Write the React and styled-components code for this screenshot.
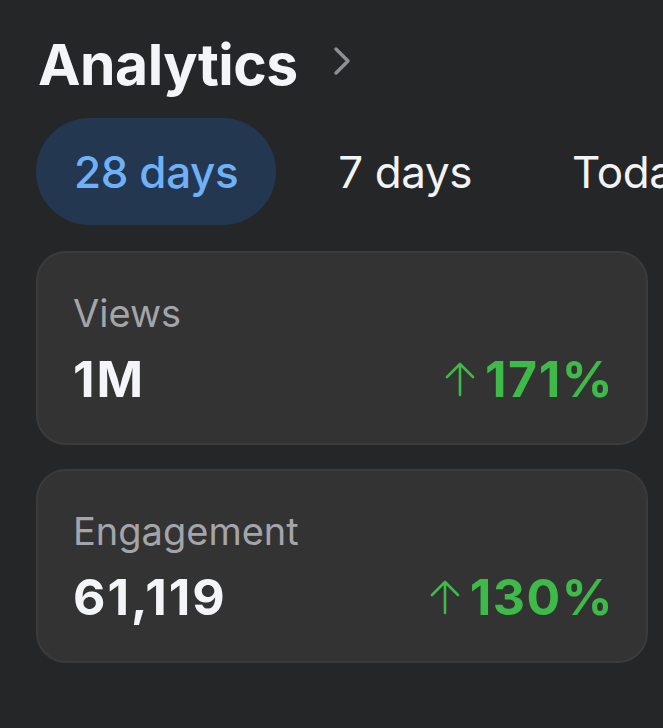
import React from "react"
import styled, { createGlobalStyle } from "styled-components"

const GlobalStyle = createGlobalStyle`
  html, body {
    margin: 0;
    padding: 0;
    background: #252628;
  }
  body {
    font-family: Inter, "Noto Sans", sans-serif;
    -webkit-font-smoothing: antialiased;
  }
`

const Page = styled.div`
  width: 663px;
  height: 728px;
  overflow: hidden;
  background: #252628;
  padding: 26px 0 0 36px;
  box-sizing: border-box;
`

const Header = styled.div`
  display: flex;
  align-items: center;
  gap: 34px;
  height: 76px;
  padding-left: 2px;
`

const Title = styled.h1`
  margin: 0;
  font-size: 57px;
  font-weight: 700;
  letter-spacing: -0.5px;
  color: #f4f5f8;
`

const Chevron = styled.svg`
  width: 20px;
  height: 30px;
  margin-top: -6px;
`

const Tabs = styled.div`
  display: flex;
  gap: 24px;
  margin-top: 16px;
  white-space: nowrap;
`

const Tab = styled.button`
  border: none;
  height: 107px;
  padding: 0 38px;
  border-radius: 54px;
  font-family: inherit;
  font-size: 44px;
  font-weight: ${p => (p.$active ? 500 : 400)};
  letter-spacing: -0.4px;
  background: ${p => (p.$active ? "#233850" : "transparent")};
  color: ${p => (p.$active ? "#6fb1f6" : "#f2f3f5")};
  flex-shrink: 0;
`

const Cards = styled.div`
  display: flex;
  flex-direction: column;
  gap: 24px;
  margin-top: 26px;
  width: 612px;
`

const Card = styled.div`
  background: #333333;
  border: 2px solid #3b3b3c;
  border-radius: 30px;
  padding: 36px 32px 33px 35px;
  display: flex;
  flex-direction: column;
  gap: 10px;
`

const Label = styled.div`
  font-size: 38px;
  color: #a4a5aa;
  line-height: 48px;
`

const Row = styled.div`
  display: flex;
  justify-content: space-between;
  align-items: center;
  line-height: 62px;
  padding-top: 1px;
`

const Value = styled.div`
  font-size: 50px;
  font-weight: 700;
  letter-spacing: 2px;
  color: #f4f5f8;
`

const Change = styled.div`
  display: flex;
  align-items: center;
  gap: 9px;
  font-size: 50px;
  font-weight: 700;
  letter-spacing: 1.5px;
  color: #3dba47;
`

const Arrow = () => (
  <svg width="32" height="36" viewBox="0 0 32 36" fill="none" stroke="#3dba47" strokeWidth="2.6" strokeLinecap="round" strokeLinejoin="round">
    <path d="M16 34V3M3 16L16 3l13 13" />
  </svg>
)

const stats = [
  { label: "Views", value: "1M", change: "171%" },
  { label: "Engagement", value: "61,119", change: "130%" },
]

export default function App() {
  return (
    <Page>
      <GlobalStyle />
      <Header>
        <Title>Analytics</Title>
        <Chevron viewBox="0 0 20 30" fill="none" stroke="#8e8e93" strokeWidth="3.5" strokeLinecap="round" strokeLinejoin="round">
          <path d="M4 3l12 12L4 27" />
        </Chevron>
      </Header>
      <Tabs>
        <Tab $active>28 days</Tab>
        <Tab>7 days</Tab>
        <Tab>Today</Tab>
      </Tabs>
      <Cards>
        {stats.map(s => (
          <Card key={s.label}>
            <Label>{s.label}</Label>
            <Row>
              <Value>{s.value}</Value>
              <Change>
                <Arrow />
                {s.change}
              </Change>
            </Row>
          </Card>
        ))}
      </Cards>
    </Page>
  )
}
